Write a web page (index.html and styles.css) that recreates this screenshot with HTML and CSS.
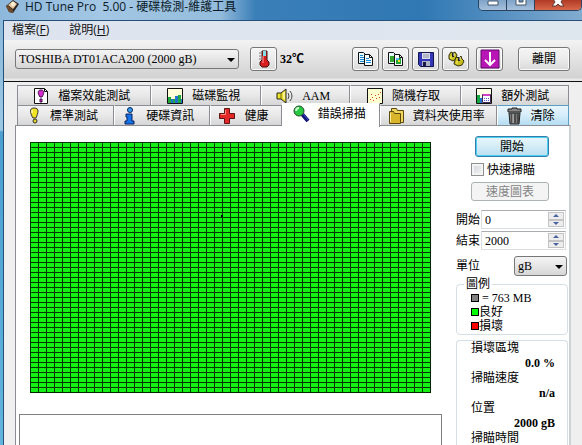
FILE: index.html
```
<!DOCTYPE html>
<html lang="zh-Hant">
<head>
<meta charset="utf-8">
<title>HD Tune Pro 5.00 - 硬碟檢測-維護工具</title>
<link rel="stylesheet" href="styles.css">
</head>
<body>
<div class="window">
  <header class="titlebar">
    <svg class="app-icon" width="15" height="14" viewBox="0 0 15 14"><path d="M1 6 8 0l6 4-6 9-4-1z" fill="#2b2420"/><path d="M3 5 8 1l4 3-4 5z" fill="#e8c9a0"/><path d="M1 6l3 6 4 1v-3L3 5z" fill="#6d4a2c"/><circle cx="8" cy="4" r="2" fill="#fff3dc"/></svg>
    <h1 class="title">HD Tune Pro&nbsp; 5.00 - 硬碟檢測-維護工具</h1>
    <div class="caption-buttons">
      <button class="cap" aria-label="最小化"><svg width="12" height="6"><path d="M1 1h10v4H1z" fill="#fff" stroke="#43566b"/></svg></button>
      <button class="cap" aria-label="最大化"><svg width="12" height="6"><path d="M1-3h10v8H1z" fill="#fff" stroke="#43566b"/><path d="M4-1h4v3H4z" fill="#6b8cb0" stroke="#43566b"/></svg></button>
      <button class="cap cap-close" aria-label="關閉"><svg width="14" height="7"><path d="M1 6 4 2 2-1h10l-2 3 3 4H9L7 4 5 6z" fill="#fff" stroke="#5c3632"/></svg></button>
    </div>
  </header>

  <div class="client">
    <nav class="menu">
      <a href="#file">檔案(<u>F</u>)</a>
      <a href="#help">說明(<u>H</u>)</a>
    </nav>

    <div class="toolbar">
      <div class="select drive"><select aria-label="磁碟機"><option>TOSHIBA DT01ACA200 (2000 gB)</option></select></div>
      <button class="tool" aria-label="溫度"><svg width="12" height="18" viewBox="0 0 12 18"><path d="M4 1h5v9l2 2v3l-2 2H4l-2-2v-3l2-2z" fill="#d81e1e" stroke="#401010"/><path d="M5 1h3v5H5z" fill="#7fe0e8"/><path d="M5 6v7" stroke="#ff9c9c"/><path d="M1 3h2M1 6h2M1 9h2" stroke="#777"/></svg></button>
      <output class="temp">32℃</output>
      <div class="tool-group">
        <button class="tool" aria-label="複製文字"><svg width="17" height="16" viewBox="0 0 17 16"><path d="M1.500 1.500h5l3 3v8h-8z" fill="#e8f8ff" stroke="#111"/><path d="M7.500 3.500h5l3 3v8h-8z" fill="#f4fcff" stroke="#111"/><path d="M3 4.500h3M3 6.500h4M3 8.500h4M3 10.500h4M9 7.500h3M9 9.500h5M9 11.500h5" stroke="#1688d8"/><path d="M12.500 3.500v3h3" fill="none" stroke="#111"/></svg></button>
        <button class="tool" aria-label="複製畫面"><svg width="17" height="16" viewBox="0 0 17 16"><path d="M1.500 1.500h5l3 3v8h-8z" fill="#e8f8ff" stroke="#111"/><path d="M3 5h4v6H3z" fill="#35a72e"/><path d="M7.500 3.500h5l3 3v8h-8z" fill="#f4fcff" stroke="#111"/><path d="M9 7h5v6H9z" fill="#24a533"/><path d="M9 7h3v2H9z" fill="#58b8f0"/><path d="M11 9h2v2h-2z" fill="#f0e02c"/><path d="M12.500 3.500v3h3" fill="none" stroke="#111"/></svg></button>
        <button class="tool" aria-label="儲存"><svg width="16" height="16" viewBox="0 0 16 16"><path d="M.5 1.500h15v14h-13l-2-2z" fill="#3437b8" stroke="#15154d"/><path d="M4 2h8v6H4z" fill="#d8dce6"/><path d="M5 4h6M5 6h6" stroke="#8c93aa"/><path d="M4 10h8v5H4z" fill="#aeb4c4"/><path d="M5 11h3v4H5z" fill="#17174a"/></svg></button>
        <button class="tool" aria-label="選項"><svg width="18" height="16" viewBox="0 0 18 16"><g fill="#c8bd20" stroke="#37330a"><path d="m2 4 2-3 2 1 2-1 2 3-1 4-3 2-4-2z"/><path d="m8 9 1-3 3 1 2-2 1 3 2 2-2 4-4 1-4-2z"/></g><path d="M6 2v4M12 6v4" stroke="#222" stroke-width="2"/><path d="M7 2v3M13 6v3" stroke="#ddd"/><path d="M4 5v3M10 10v3" stroke="#fff36b"/></svg></button>
        <button class="tool tool-apart" aria-label="最小化到系統列"><svg width="20" height="20" viewBox="0 0 20 20"><path d="M1 1h18v18H1z" fill="#b917b5" stroke="#5d0b68"/><path d="M10 3v13M5 11l5 5 5-5" fill="none" stroke="#fff" stroke-width="2"/></svg></button>
      </div>
      <button class="tool exit">離開</button>
    </div>

    <main class="tabs">
      <div class="tab-row" role="tablist">
        <button class="tab w135" role="tab"><svg width="18" height="18" viewBox="0 0 18 18"><path d="M2.500 1.500h10l3 3v12h-13z" fill="#fff" stroke="#111"/><path d="M12.500 1.500v3h3" fill="none" stroke="#111"/><path d="M9 3c4 0 3 4 1 7H8C6 7 5 3 9 3zM8 12h2v3H8z" fill="#d32bd0" stroke="#430b48"/></svg>檔案效能測試</button>
        <button class="tab w110" role="tab"><svg width="18" height="18" viewBox="0 0 18 18"><path d="M1.500 1.500h15v15h-15z" fill="#ffffd8" stroke="#111"/><path d="M2 10h3v6H2zM7 12h2v4H7zM12 8h3v8h-3z" fill="#1fa83d"/><path d="M5 12h2v4H5zM9 9h3v7H9zM15 12h1v4h-1z" fill="#2473cf"/></svg>磁碟監視</button>
        <button class="tab w88" role="tab"><svg width="18" height="16" viewBox="0 0 18 16"><path d="M1 5h4l5-4v14l-5-4H1z" fill="#f0e228" stroke="#222"/><path d="M5 5v6" stroke="#6b6410"/><path d="M8 4v7" stroke="#fff"/><path d="M12 5q2 3 0 6M14 3q4 5 0 10" fill="none" stroke="#444"/></svg>AAM</button>
        <button class="tab w110" role="tab"><svg width="18" height="18" viewBox="0 0 18 18"><path d="M1.500 1.500h15v15h-15z" fill="#ffffcf" stroke="#111"/><path d="M4 12.500h1M6 10.500h1M7 13.500h1M9 8.500h1M10 11.500h1M12 7.500h1M13 10.500h1M14 5.500h1M5 7.500h1" stroke="#d3472a"/></svg>隨機存取</button>
        <button class="tab w108" role="tab"><svg width="18" height="18" viewBox="0 0 18 18"><path d="M1.500 1.500h15v15h-15z" fill="#ffffe8" stroke="#111"/><path d="M2 8h3v8H2z" fill="#18a546"/><path d="M5 11h2v5H5z" fill="#2473cf"/><path d="M7.500 7.500h8v8h-8z" fill="#fff" stroke="#402850"/><path d="M8 8h7" stroke="#d33fc7" stroke-width="2"/><path d="M9 11.500h5M9 13.500h5" stroke="#5757c8" stroke-dasharray="1"/></svg>額外測試</button>
      </div>
      <div class="tab-row" role="tablist">
        <button class="tab tab-wide w97" role="tab"><svg width="12" height="18" viewBox="0 0 12 18"><path d="M6 1c6 0 4 5 2 10H5C2 6 1 1 6 1z" fill="#f0e423" stroke="#333"/><path d="M4 3v3" stroke="#fff"/><ellipse cx="7" cy="14" rx="2" ry="2" fill="#e2d422" stroke="#333"/></svg>標準測試</button>
        <button class="tab tab-wide w96" role="tab"><svg width="12" height="18" viewBox="0 0 12 18"><circle cx="6" cy="3" r="2.500" fill="#31a0f0" stroke="#08205c"/><path d="M2 7h6v7h2v3H1v-3h2v-4H2z" fill="#1573ea" stroke="#08205c"/></svg>硬碟資訊</button>
        <button class="tab w71" role="tab"><svg width="18" height="18" viewBox="0 0 18 18"><path d="M6.500 1.500h5v5h5v5h-5v5h-5v-5h-5v-5h5z" fill="#e32626" stroke="#5a1414"/><path d="M7.500 3v4.500H3" fill="none" stroke="#ff8f80"/></svg>健康</button>
        <button class="tab tab-active w98" role="tab" aria-selected="true"><svg width="18" height="18" viewBox="0 0 18 18"><path d="m10 9 6 7" stroke="#101070" stroke-width="4"/><path d="m11 9 5 6" stroke="#3a4cdc"/><circle cx="7" cy="6" r="5" fill="#27c943" stroke="#244b28"/><path d="M4 6q0-3 3-3" fill="none" stroke="#c5ffd0" stroke-width="2"/></svg>錯誤掃描</button>
        <button class="tab w119" role="tab"><svg width="17" height="18" viewBox="0 0 17 18"><path d="M3.500 1.500h5l1 2h6v12h-12z" fill="#efd55e" stroke="#5b4a0b"/><path d="M1.500 4.500h4l1 2h6v10h-11z" fill="#d9b52b" stroke="#5b4a0b"/><path d="M2.500 6v9" stroke="#fff0a0"/></svg>資料夾使用率</button>
        <button class="tab tab-hot w70" role="tab"><svg width="16" height="18" viewBox="0 0 16 18"><path d="M5 2V1h5v1h4v3H1V2z" fill="#888" stroke="#222"/><path d="M2 6h11l-1 11H3z" fill="#777" stroke="#222"/><path d="M5 7v9M8 7v9M11 7v9" stroke="#222"/><path d="M6 7v9" stroke="#ccc"/></svg>清除</button>
      </div>

      <section class="page" role="tabpanel">
        <div class="scan">
          <div class="blocks" role="img" aria-label="區塊圖"></div>
          <div class="log"></div>
        </div>
        <aside class="side">
          <div class="actions">
            <button class="btn btn-default">開始</button>
            <label class="check"><input type="checkbox">快速掃瞄</label>
            <button class="btn btn-disabled" disabled>速度圖表</button>
          </div>
          <div class="field">
            <label for="from">開始</label>
            <div class="spin"><input id="from" type="text" value="0"><span class="arrows"><button class="up" aria-label="增加"></button><button class="down" aria-label="減少"></button></span></div>
          </div>
          <div class="field">
            <label for="to">結束</label>
            <div class="spin"><input id="to" type="text" value="2000"><span class="arrows"><button class="up" aria-label="增加"></button><button class="down" aria-label="減少"></button></span></div>
          </div>
          <div class="field unit">
            <label for="unit">單位</label>
            <div class="select"><select id="unit"><option>gB</option></select></div>
          </div>
          <fieldset class="legend">
            <legend>圖例</legend>
            <ul>
              <li><i class="swatch gray"></i>&nbsp;= 763 MB</li>
              <li><i class="swatch green"></i>良好</li>
              <li><i class="swatch red"></i>損壞</li>
            </ul>
          </fieldset>
          <dl class="stats">
            <dt>損壞區塊</dt><dd>0.0 %</dd>
            <dt>掃瞄速度</dt><dd>n/a</dd>
            <dt>位置</dt><dd>2000 gB</dd>
            <dt>掃瞄時間</dt>
          </dl>
        </aside>
      </section>
    </main>
  </div>
</div>
</body>
</html>
```
FILE: styles.css
```
* { box-sizing: border-box; }

body {
  margin: 0;
  font: 12px/16px "Liberation Serif", "Noto Sans CJK TC", serif;
  color: #000;
}

button, input, select {
  margin: 0;
  padding: 0;
  font: inherit;
  color: inherit;
}

svg { display: block; flex: none; }

.window {
  display: flex;
  flex-direction: column;
  height: 100vh;
  overflow: hidden;
  padding-left: 3px;
  background: linear-gradient(#8ab6da, #9cc8e4 130px, #4a9fd0 132px, #62b4de);
}

/* Title bar */
.titlebar {
  display: flex;
  align-items: flex-start;
  flex: none;
  height: 20px;
  margin-left: -3px;
  padding-left: 5px;
  background: linear-gradient(90deg, #8db8dc, #a3c7e4 100px, #94bcdc 220px, #3b7fb8 255px, #2f78b3 420px, #4b89bd 480px, #82acd0);
}
.title {
  flex: 1;
  margin: 0 0 0 5px;
  font: 12px/14px "Open Sans", "Noto Sans CJK TC", sans-serif;
  white-space: nowrap;
  color: #0c1a28;
}
.caption-buttons {
  display: flex;
  height: 11px;
  border: 1px solid #2a4460;
  border-top: 0;
  border-radius: 0 0 5px 5px;
  overflow: hidden;
}
.cap {
  display: flex;
  justify-content: center;
  width: 28px;
  border: 0;
  border-right: 1px solid #2a4460;
  background: linear-gradient(#7fa3c8, #a6c0dc);
}
.cap-close {
  width: 46px;
  border: 0;
  background: linear-gradient(#b03a24, #d8684c);
}

/* Client area */
.client {
  display: flex;
  flex-direction: column;
  flex: 1;
  min-height: 0;
  border: 1px solid #24507a;
  border-width: 1px 0 0 1px;
  background: #efefef;
}
.menu {
  display: flex;
  gap: 20px;
  flex: none;
  height: 19px;
  padding-left: 8px;
  background: linear-gradient(90deg, #dde4ef, #dee6ee);
  font: 12px/18px "Open Sans", "Noto Sans CJK TC", sans-serif;
}
.menu a { color: #111; text-decoration: none; }

.toolbar {
  display: flex;
  align-items: center;
  flex: none;
  height: 42px;
  padding: 0 12px 4px 11px;
  border-bottom: 1px solid #111;
  background: linear-gradient(#f3f3f3, #d2d2d2 38px, #e8e8e8 39px);
}
.select { position: relative; }
.select select {
  display: block;
  width: 100%;
  height: 20px;
  padding-left: 3px;
  appearance: none;
  border: 1px solid #777;
  border-radius: 3px;
  background: linear-gradient(#f4f4f4, #e6e6e6 50%, #d6d6d6);
}
.select::after {
  content: "";
  position: absolute;
  top: 9px;
  right: 4px;
  border: 4px solid transparent;
  border-top-color: #000;
  border-bottom: 0;
  pointer-events: none;
}
.drive { width: 224px; margin-right: 11px; }
.tool {
  display: flex;
  align-items: center;
  justify-content: center;
  width: 27px;
  height: 24px;
  border: 1px solid #777;
  border-radius: 3px;
  background: linear-gradient(#f5f5f5, #ebebeb 50%, #d9d9d9);
  box-shadow: inset 0 0 0 1px #fafafa;
}
.temp { margin-left: 3px; font-weight: bold; }
.tool-group { display: flex; gap: 3px; margin-left: auto; }
.tool-apart { margin-left: 4px; }
.exit { width: 52px; margin-left: 15px; }

/* Tabs */
.tabs {
  display: flex;
  flex-direction: column;
  flex: 1;
  min-height: 0;
  padding: 3px 11px 0 11px;
}
.tab-row { display: flex; flex: none; height: 20px; padding: 0 2px; }
.tab {
  display: flex;
  align-items: center;
  justify-content: center;
  gap: 8px;
  flex-basis: 0;
  height: 20px;
  padding-right: 5px;
  border: 1px solid #8a8d92;
  border-width: 1px 1px 0 1px;
  background: linear-gradient(#f3f3f3, #e8e8e8 50%, #d6d6d6);
  white-space: nowrap;
}
.tab + .tab { border-left-color: #fff; }
.tab-wide { gap: 10px; }
.w70 { flex-grow: 70; }
.w71 { flex-grow: 71; }
.w88 { flex-grow: 88; }
.w96 { flex-grow: 96; }
.w97 { flex-grow: 97; }
.w98 { flex-grow: 98; }
.w108 { flex-grow: 108; }
.w110 { flex-grow: 110; }
.w119 { flex-grow: 119; }
.w135 { flex-grow: 135; }
.tab-active {
  z-index: 1;
  height: 24px;
  margin-top: -2px;
  padding-bottom: 4px;
  border-color: #fff #8a8d92 #fff #fff;
  background: #fff;
}
.tab-hot {
  border-color: #5c9fc4;
  background: linear-gradient(#e9f5fc, #d6edfa 50%, #b4dcf2);
}

.page {
  display: flex;
  flex: 1;
  min-height: 0;
  border: 1px solid #8a8d92;
  border-width: 1px 2px 0 1px;
  border-right-color: #cfd2d4;
  background: #fff;
}
.scan {
  display: flex;
  flex-direction: column;
  flex: 1;
  padding: 16px 0 0 3px;
}
.blocks {
  flex: none;
  width: 401px;
  height: 251px;
  margin: 0 11px;
  border: solid #002800;
  border-width: 0 1px 1px 0;
  background:
    linear-gradient(#000, #000) 191px 73px / 2px 2px no-repeat,
    repeating-linear-gradient(90deg, #003800 0 1px, transparent 1px 8px),
    repeating-linear-gradient(#003800 0 1px, #14f014 1px 5px);
}
.log {
  flex: 1;
  margin-top: 21px;
  border: 1px solid #7d8083;
  border-bottom: 0;
}

/* Side column */
.side {
  display: flex;
  flex-direction: column;
  flex: none;
  width: 127px;
  padding: 10px 1px 0 14px;
}
.actions {
  display: flex;
  flex-direction: column;
  flex: none;
  padding: 0 19px 0 15px;
}
.btn {
  height: 19px;
  border: 1px solid #777;
  border-radius: 3px;
  line-height: 16px;
}
.btn-default {
  height: 21px;
  margin-left: 4px;
  border-color: #2f7fa8;
  background: linear-gradient(#eaf6fb, #d3ecf7 50%, #b9dff0);
  box-shadow: inset 0 0 0 1px #4fcdf2;
}
.btn-disabled { border-color: #adb2b5; background: #f4f4f4; color: #838383; }
.check { display: flex; align-items: center; gap: 3px; height: 25px; white-space: nowrap; }
.check input {
  flex: none;
  width: 13px;
  height: 13px;
  appearance: none;
  border: 1px solid #8e8f8f;
  background: linear-gradient(135deg, #cfd3d7, #f6f6f6);
  box-shadow: inset 0 0 0 2px #f4f4f4;
}
.field { display: flex; align-items: center; gap: 1px; flex: none; height: 21px; }
.field label { flex: none; }
.actions + .field { margin-top: 8px; }
.spin {
  display: flex;
  flex: 1;
  min-width: 0;
  height: 19px;
  margin-right: 2px;
  padding: 1px;
  border: 1px solid #dcdfe2;
  border-top-color: #abadb3;
}
.spin input { flex: 1; min-width: 0; padding-left: 2px; border: 0; background: none; }
.arrows { display: flex; flex-direction: column; flex: none; width: 16px; }
.arrows button {
  display: flex;
  align-items: center;
  justify-content: center;
  flex: 1;
  min-height: 0;
  border: 1px solid #c4c4c4;
  background: #ededed;
}
.arrows button::before { content: ""; border: 3px solid transparent; }
.arrows .up::before { border-top: 0; border-bottom-color: #4a62a0; }
.arrows .down::before { border-bottom: 0; border-top-color: #4a62a0; }
.unit { justify-content: space-between; height: 22px; margin-top: 4px; }
.unit .select { width: 53px; margin-right: 1px; }

.legend {
  flex: none;
  min-width: 0;
  margin: 0;
  padding: 0 14px 1px;
  border: 1px solid #d5dfe5;
  border-radius: 4px;
}
.legend legend { margin-left: -7px; padding: 0 2px; line-height: 14px; }
.legend ul { margin: 0; padding: 0; list-style: none; }
.legend li { display: flex; align-items: center; height: 14px; }
.swatch { width: 8px; height: 8px; border: 1px solid #000; }
.gray { background: #808080; }
.green { background: #0f0; }
.red { background: #f00; }

.stats {
  flex: 1;
  min-height: 0;
  margin: 5px 0 0;
  padding: 0 12px 0 14px;
  border: 1px solid #d5dfe5;
  border-bottom: 0;
  border-radius: 4px 4px 0 0;
}
.stats dt { line-height: 15px; }
.stats dd { margin: 0; font-weight: bold; line-height: 15px; text-align: right; }
```
